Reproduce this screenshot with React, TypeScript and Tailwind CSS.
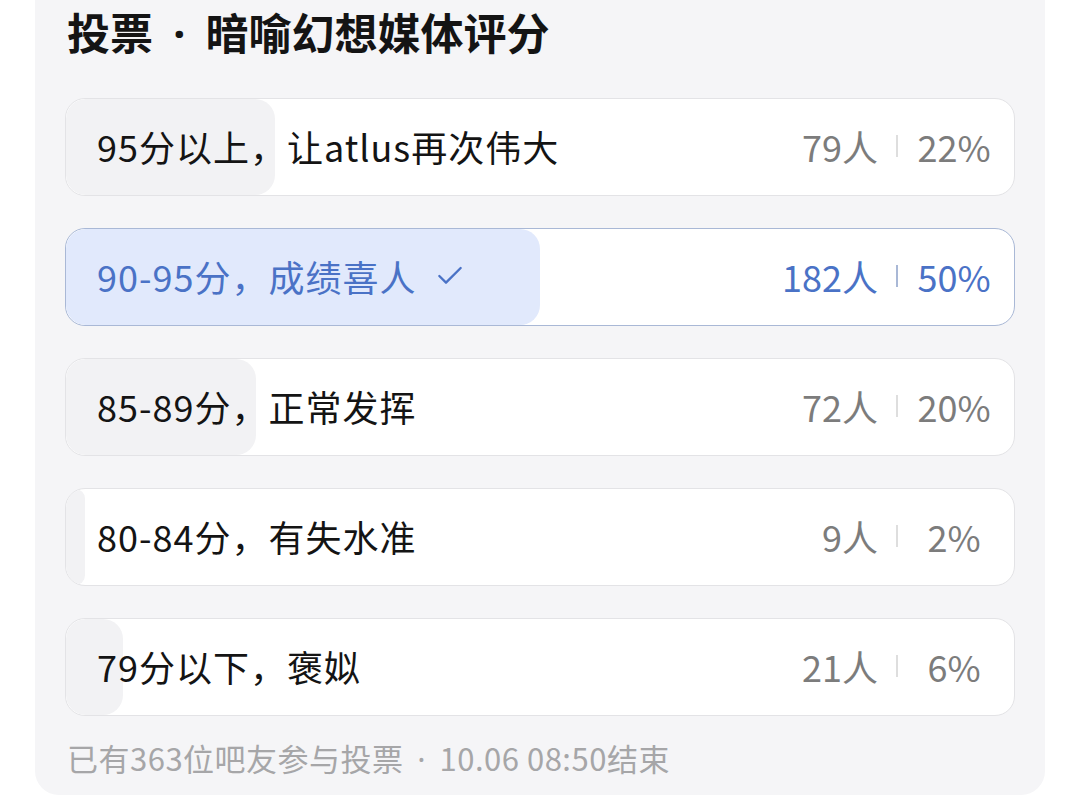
import React from 'react';
import { Check } from 'lucide-react';

type Option = {
  label: string;
  count: number;
  percent: number;
  selected?: boolean;
};

const options: Option[] = [
  { label: '95分以上，让atlus再次伟大', count: 79, percent: 22 },
  { label: '90-95分，成绩喜人', count: 182, percent: 50, selected: true },
  { label: '85-89分，正常发挥', count: 72, percent: 20 },
  { label: '80-84分，有失水准', count: 9, percent: 2 },
  { label: '79分以下，褒姒', count: 21, percent: 6 },
];

const font = { fontFamily: '"Noto Sans CJK SC", "Noto Sans", sans-serif' };

const PollOption: React.FC<{ option: Option }> = ({ option }) => {
  const { label, count, percent, selected } = option;
  return (
    <div
      className={`relative h-[98px] overflow-hidden rounded-[20px] border bg-white ${
        selected ? 'border-[#a9b8d6]' : 'border-[#e3e3e6]'
      }`}
    >
      {/* result bar */}
      <div
        className={`absolute inset-y-0 left-0 rounded-[20px] ${selected ? 'bg-[#e1e9fc]' : 'bg-[#f2f2f4]'}`}
        style={{ width: `${percent}%` }}
      />
      <div className="relative -mt-[1px] flex h-full items-center justify-between pl-[31px] pr-[22px]">
        <div className={`flex items-center text-[36px] tracking-[1px] ${selected ? 'text-[#4a72c6]' : 'text-[#141414]'}`}>
          <span>{label}</span>
          {selected && <Check className="ml-[18px] h-[32px] w-[32px]" strokeWidth={1.75} />}
        </div>
        <div className={`flex items-center text-[36px] ${selected ? 'text-[#4a72c6]' : 'text-[#7c7c7c]'}`}>
          <span>{count}人</span>
          <span className={`mx-[18px] h-[22px] w-[2px] ${selected ? 'bg-[#a9b8d6]' : 'bg-[#dedede]'}`} />
          <span className="w-[76px] text-center">{percent}%</span>
        </div>
      </div>
    </div>
  );
};

const App: React.FC = () => {
  return (
    <div className="min-h-[795px] w-[1080px] overflow-hidden bg-white" style={font}>
      <div className="ml-[35px] w-[1010px] rounded-b-[24px] bg-[#f5f5f7] px-[30px] pb-[16px] pt-[3px]">
        <h1 className="ml-[2px] text-[43px] font-bold leading-[56px] text-[#141414]">
          投票<span className="mx-[9px] font-['Noto_Sans']"> · </span>暗喻幻想媒体评分
        </h1>

        <div className="mt-[36px] flex flex-col gap-8">
          {options.map((option) => (
            <PollOption key={option.label} option={option} />
          ))}
        </div>

        <p className="ml-[2px] mt-[22px] text-[31px] leading-[40px] tracking-[0.5px] text-[#a6a6a8]">
          已有363位吧友参与投票<span className="mx-[5px] font-['Noto_Sans']"> · </span>10.06 08:50结束
        </p>
      </div>
    </div>
  );
};

export default App;
